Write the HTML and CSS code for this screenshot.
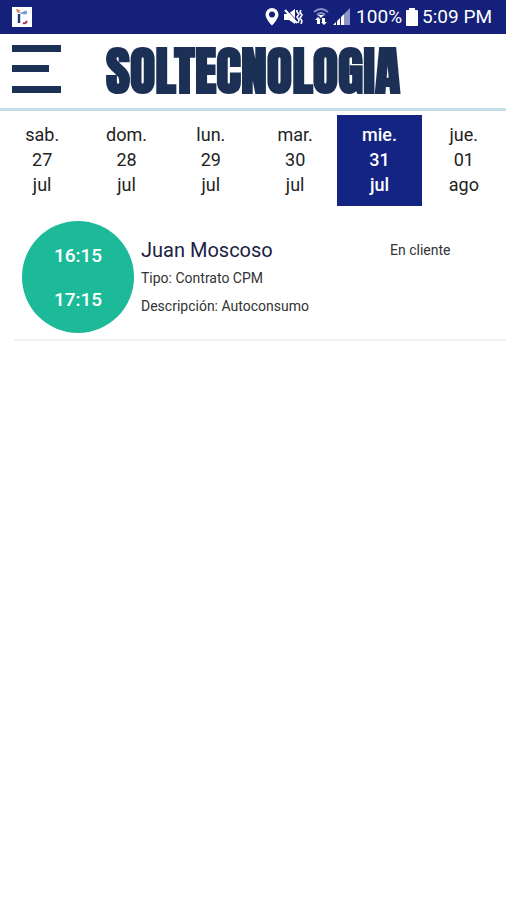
FILE: index.html
```
<!DOCTYPE html>
<html lang="es">
<head>
    <meta charset="UTF-8">
    <meta name="viewport" content="width=device-width, initial-scale=1.0">
    <title>Soltecnologia</title>
    <link rel="stylesheet" href="styles.css">
</head>
<body>
    <div class="status">
        <svg class="app" width="22" height="22" viewBox="0 0 22 22">
            <rect x="1" y="1" width="20" height="20" fill="#fff"/>
            <path d="M8 8v9" stroke="#26347c" stroke-width="2.4"/>
            <path d="M8 6c3 2 5-2 8-1v3c-3 1-5 0-8-1z" fill="#7c9ed4"/>
            <path d="M5 3l4 1-1 3-2-1z" fill="#d8795a"/>
            <path d="M12 17c2 1 3 0 4-2" fill="none" stroke="#a83350" stroke-width="2"/>
        </svg>
        <div class="icons">
            <svg width="14" height="18" viewBox="0 0 14 18">
                <path fill="#fff" fill-rule="evenodd" d="M7 0a6.5 6.5 0 0 0-6.500 6.500C.5 11 7 17.500 7 17.500S13.500 11 13.500 6.500A6.500 6.500 0 0 0 7 0zm0 3.500a3 3 0 1 1 0 6 3 3 0 0 1 0-6z"/>
            </svg>
            <svg width="20" height="18" viewBox="0 0 20 18">
                <path fill="#fff" d="M1 6h4l7-5v15l-6-4H1z"/>
                <path d="M4 2l10 11" stroke="#142079" stroke-width="1"/>
                <path d="M2 2l12 13" stroke="#fff" stroke-width="2"/>
                <path d="M14 2v2l2 2-2 3 2 3-1 3M18 2l-1 2 2 3-2 3 2 3-1 3" fill="none" stroke="#fff" stroke-width="1.600"/>
            </svg>
            <svg class="wifi" width="16" height="18" viewBox="0 0 16 18">
                <path d="M1 4q7-6 14 0M4 7q4-4 8 0" fill="none" stroke="#8990c6" stroke-width="1.800"/>
                <path d="M5 7h6l-3 3z" fill="#fff"/>
                <path fill="#fff" d="M5 9l3 3H7v4H4v-4H2zM9 10h3v4h2l-3 3-3-3h1z"/>
            </svg>
            <svg class="signal" width="18" height="18" viewBox="0 0 18 18">
                <path fill="#fff" d="M0 17l3-3v3zM4 13l3-3v7H4zM8 9l3-3v11H8z"/>
                <path fill="#8d94c8" d="M11 6l3-3v14h-3zM14 3l3-3v17h-3z"/>
            </svg>
            <span>100%</span>
            <svg class="battery" width="12" height="18" viewBox="0 0 12 18">
                <path fill="#fff" d="M3 0h6v2h2q1 0 1 1v14q0 1-1 1H1q-1 0-1-1V3q0-1 1-1h2z"/>
            </svg>
            <span>5:09 PM</span>
        </div>
    </div>
    <header>
        <button class="menu" aria-label="Menu">
            <svg width="50" height="50" viewBox="0 0 50 50">
                <path fill="#1b3156" d="M0 1h49v7H0zM0 21h37v7H0zM0 42h49v7H0z"/>
            </svg>
        </button>
        <h1>SOLTECNOLOGIA</h1>
    </header>
    <nav class="days">
        <button>sab.<br>27<br>jul</button>
        <button>dom.<br>28<br>jul</button>
        <button>lun.<br>29<br>jul</button>
        <button>mar.<br>30<br>jul</button>
        <button class="active">mie.<br>31<br>jul</button>
        <button>jue.<br>01<br>ago</button>
    </nav>
    <main>
        <div class="visit">
            <div class="hours">
                <span>16:15</span>
                <span>17:15</span>
            </div>
            <div class="info">
                <h2>Juan Moscoso</h2>
                <p>Tipo: Contrato CPM</p>
                <p>Descripción: Autoconsumo</p>
            </div>
            <div class="state">En cliente</div>
        </div>
    </main>
</body>
</html>
```
FILE: styles.css
```
body {
    margin: 0;
    padding: 0;
    font-family: Roboto, sans-serif;
    background-color: #fff;
}
button {
    border: 0;
    padding: 0;
    background: none;
    font-family: inherit;
}
svg {
    display: block;
}
.status {
    display: flex;
    align-items: center;
    justify-content: space-between;
    height: 34px;
    padding: 0 14px 0 11px;
    background-color: #142079;
    color: #fff;
    font-size: 19px;
    line-height: 34px;
}
.icons {
    display: flex;
    align-items: center;
    gap: 4px;
}
.wifi {
    margin-left: 6px;
}
.signal {
    margin-right: 1px;
}
header {
    display: flex;
    align-items: center;
    height: 74px;
    border-bottom: 3px solid #c5dfea;
}
.menu {
    margin-left: 12px;
    margin-bottom: 4px;
}
h1 {
    margin: 0 0 0 44px;
    font-family: Anton, Impact, sans-serif;
    font-size: 52px;
    font-weight: normal;
    line-height: 60px;
    color: #1c2f54;
    -webkit-text-stroke: 2px #1c2f54;
}
.days {
    display: grid;
    grid-template-columns: repeat(6, 1fr);
    padding-top: 4px;
}
.days button {
    height: 91px;
    padding-bottom: 3px;
    font-size: 18px;
    line-height: 25px;
    color: #222;
}
.days .active {
    background-color: #142482;
    color: #fff;
    font-weight: 500;
}
.visit {
    display: flex;
    margin-left: 14px;
    padding: 15px 0 6px 8px;
    border-bottom: 2px solid #f1f1f1;
}
.hours {
    display: flex;
    flex-direction: column;
    align-items: center;
    justify-content: center;
    gap: 20px;
    width: 112px;
    height: 110px;
    padding-top: 2px;
    border-radius: 50%;
    background-color: #1dba9a;
    color: #fff;
    font-size: 19px;
    font-weight: 500;
    line-height: 24px;
}
.info {
    flex: 1;
    margin-left: 7px;
    padding-top: 15px;
}
h2 {
    margin: 0;
    font-size: 20px;
    font-weight: normal;
    line-height: 28px;
    color: #20213f;
}
.info p {
    margin: 0;
    font-size: 14px;
    line-height: 28px;
    color: #333;
}
.state {
    width: 116px;
    padding-top: 15px;
    font-size: 14px;
    line-height: 28px;
    color: #333;
}
```
